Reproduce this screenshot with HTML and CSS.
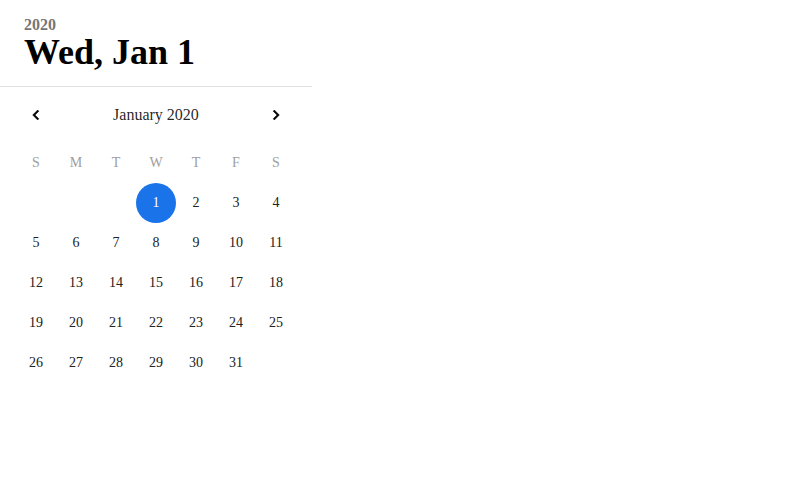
FILE: index.html
```html
<!DOCTYPE html>
<html lang="en">
<head>
<meta charset="utf-8">
<title>Date picker</title>
<link rel="stylesheet" href="styles.css">
</head>
<body>
<div class="picker">
  <div class="toolbar">
    <div class="year">2020</div>
    <div class="date">Wed, Jan 1</div>
  </div>
  <div class="calendar">
    <div class="month-header">
      <button class="nav" aria-label="Previous month">
        <svg viewBox="0 0 24 24" width="20" height="20"><path d="M15.41 7.41L14 6l-6 6 6 6 1.41-1.41L10.83 12z"/></svg>
      </button>
      <div class="month-label">January 2020</div>
      <button class="nav" aria-label="Next month">
        <svg viewBox="0 0 24 24" width="20" height="20"><path d="M10 6L8.59 7.41 13.17 12l-4.58 4.59L10 18l6-6z"/></svg>
      </button>
    </div>
    <div class="grid">
      <div class="wd">S</div><div class="wd">M</div><div class="wd">T</div><div class="wd">W</div><div class="wd">T</div><div class="wd">F</div><div class="wd">S</div>
      <div class="day"></div><div class="day"></div><div class="day"></div>
      <div class="day selected">1</div><div class="day">2</div><div class="day">3</div><div class="day">4</div>
      <div class="day">5</div><div class="day">6</div><div class="day">7</div><div class="day">8</div><div class="day">9</div><div class="day">10</div><div class="day">11</div>
      <div class="day">12</div><div class="day">13</div><div class="day">14</div><div class="day">15</div><div class="day">16</div><div class="day">17</div><div class="day">18</div>
      <div class="day">19</div><div class="day">20</div><div class="day">21</div><div class="day">22</div><div class="day">23</div><div class="day">24</div><div class="day">25</div>
      <div class="day">26</div><div class="day">27</div><div class="day">28</div><div class="day">29</div><div class="day">30</div><div class="day">31</div>
    </div>
  </div>
</div>
</body>
</html>
```
FILE: styles.css
```css
html, body {
  margin: 0;
  padding: 0;
  background: #fff;
}
body {
  font-family: "Liberation Serif", "Times New Roman", serif;
  color: rgba(0, 0, 0, 0.87);
}
.picker {
  width: 312px;
}
.toolbar {
  padding: 15px 24px 16px;
  border-bottom: 1px solid #e0e0e0;
}
.year {
  font-size: 16px;
  font-weight: bold;
  line-height: 20px;
  color: #757575;
}
.date {
  font-size: 36px;
  font-weight: bold;
  line-height: 35px;
  color: #000;
}
.calendar {
  padding: 8px 16px 0;
}
.month-header {
  display: flex;
  align-items: center;
  justify-content: space-between;
  height: 40px;
  margin-bottom: 8px;
}
.nav {
  width: 40px;
  height: 40px;
  padding: 0;
  border: 0;
  background: none;
  display: flex;
  align-items: center;
  justify-content: center;
  border-radius: 50%;
}
.nav svg {
  display: block;
  fill: #000;
  stroke: #000;
  stroke-width: 0.6;
  stroke-linejoin: round;
}
.month-label {
  font-size: 16px;
  line-height: 24px;
  color: rgba(0, 0, 0, 0.87);
}
.grid {
  display: grid;
  grid-template-columns: repeat(7, 40px);
  grid-auto-rows: 40px;
}
.wd, .day {
  display: flex;
  align-items: center;
  justify-content: center;
  font-size: 14px;
  line-height: 40px;
}
.wd {
  color: #9e9e9e;
}
.day {
  color: #212121;
}
.day.selected {
  background: #1a73e8;
  color: #fff;
  border-radius: 50%;
}
```
